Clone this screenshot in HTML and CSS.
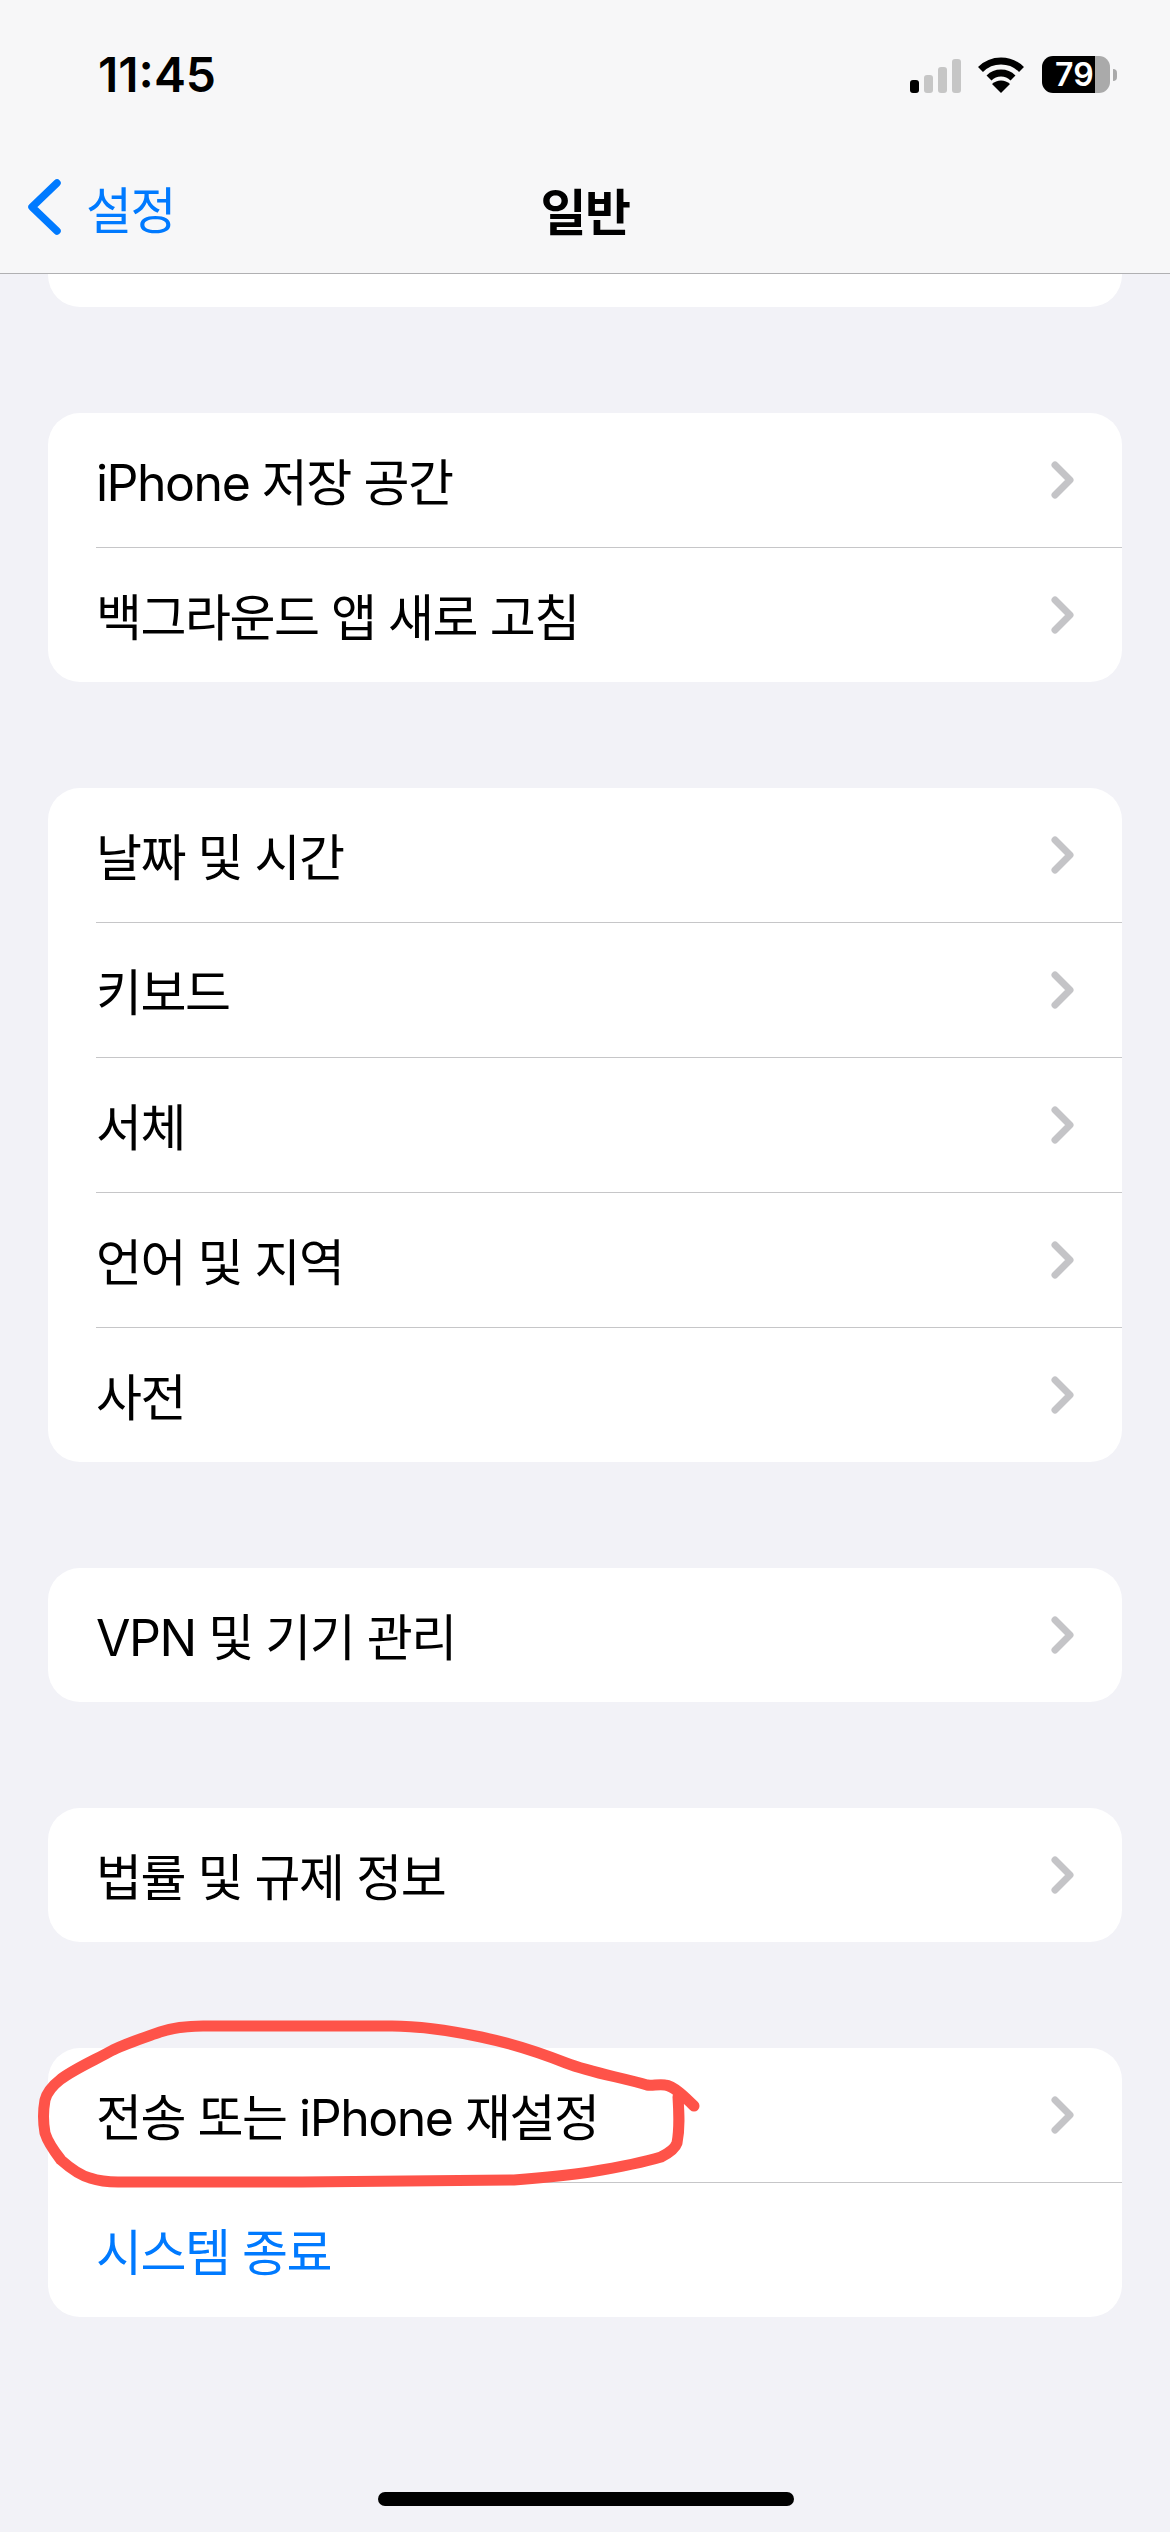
FILE: index.html
```html
<!DOCTYPE html>
<html lang="ko">
<head>
    <meta charset="utf-8">
    <title>일반</title>
    <link rel="stylesheet" href="styles.css">
</head>
<body>
    <div class="phone">
        <header class="top-bar">
            <div class="status-bar">
                <span class="clock">11:45</span>
                <div class="status-icons">
                    <div class="signal">
                        <span class="bar bar-1 on"></span>
                        <span class="bar bar-2"></span>
                        <span class="bar bar-3"></span>
                        <span class="bar bar-4"></span>
                    </div>
                    <svg class="wifi" viewBox="0 0 48 36" width="48" height="36">
                        <path d="M3.5 12.5A29 29 0 0 1 44.5 12.5" fill="none" stroke="#000" stroke-width="7"/>
                        <path d="M12 21A17 17 0 0 1 36 21" fill="none" stroke="#000" stroke-width="7"/>
                        <path d="M24 36L15 27A13 13 0 0 1 33 27Z" fill="#000"/>
                    </svg>
                    <div class="battery"><span>79</span></div>
                    <span class="battery-nub"></span>
                </div>
            </div>
            <nav class="nav-bar">
                <a class="back-link">
                    <svg class="back-icon" viewBox="0 0 36 58" width="36" height="58">
                        <path d="M31 5L6 29L31 53" fill="none" stroke="#007aff" stroke-width="7.5" stroke-linecap="round" stroke-linejoin="round"/>
                    </svg>
                    설정
                </a>
                <h1 class="nav-title">일반</h1>
            </nav>
        </header>

        <main class="settings">
            <div class="card card-cut"></div>

            <section class="card">
                <div class="row"><span>iPhone 저장 공간</span><svg class="chevron" viewBox="0 0 24 38" width="24" height="38"><path d="M4 4L19 19L4 34"/></svg></div>
                <div class="row"><span>백그라운드 앱 새로 고침</span><svg class="chevron" viewBox="0 0 24 38" width="24" height="38"><path d="M4 4L19 19L4 34"/></svg></div>
            </section>

            <section class="card">
                <div class="row"><span>날짜 및 시간</span><svg class="chevron" viewBox="0 0 24 38" width="24" height="38"><path d="M4 4L19 19L4 34"/></svg></div>
                <div class="row"><span>키보드</span><svg class="chevron" viewBox="0 0 24 38" width="24" height="38"><path d="M4 4L19 19L4 34"/></svg></div>
                <div class="row"><span>서체</span><svg class="chevron" viewBox="0 0 24 38" width="24" height="38"><path d="M4 4L19 19L4 34"/></svg></div>
                <div class="row"><span>언어 및 지역</span><svg class="chevron" viewBox="0 0 24 38" width="24" height="38"><path d="M4 4L19 19L4 34"/></svg></div>
                <div class="row"><span>사전</span><svg class="chevron" viewBox="0 0 24 38" width="24" height="38"><path d="M4 4L19 19L4 34"/></svg></div>
            </section>

            <section class="card">
                <div class="row"><span>VPN 및 기기 관리</span><svg class="chevron" viewBox="0 0 24 38" width="24" height="38"><path d="M4 4L19 19L4 34"/></svg></div>
            </section>

            <section class="card">
                <div class="row"><span>법률 및 규제 정보</span><svg class="chevron" viewBox="0 0 24 38" width="24" height="38"><path d="M4 4L19 19L4 34"/></svg></div>
            </section>

            <section class="card">
                <div class="row"><span>전송 또는 iPhone 재설정</span><svg class="chevron" viewBox="0 0 24 38" width="24" height="38"><path d="M4 4L19 19L4 34"/></svg></div>
                <div class="row row-action"><span>시스템 종료</span></div>
            </section>
        </main>

        <div class="home-bar"></div>

        <!-- red marker drawn on top of the screenshot -->
        <svg class="marker" viewBox="0 0 1170 2532" width="1170" height="2532">
            <path d="M694 2106C685 2097 674 2086 665 2085C658 2084 652 2086 647 2085C620 2077 592 2073 566 2063C538 2052 510 2043 481 2037C452 2031 422 2026 392 2026L203 2026C185 2026 172 2028 160 2032C143 2038 127 2043 113 2050C95 2060 76 2068 61 2079C52 2086 47 2092 45 2100C43 2111 43 2122 45 2133C48 2143 54 2151 61 2160C70 2168 79 2175 90 2178C99 2181 109 2182 118 2182L302 2182L514 2180C540 2178 565 2176 590 2172C614 2168 638 2164 661 2157C669 2153 675 2149 677 2143C680 2128 679 2113 678 2097"/>
        </svg>
    </div>
</body>
</html>
```

FILE: styles.css
```css
html, body {
    margin: 0;
    padding: 0;
}
body {
    font-family: Inter, "Noto Sans CJK KR", sans-serif;
    background-color: #f2f2f7;
}
.phone {
    position: relative;
    width: 1170px;
    height: 2532px;
    overflow: hidden;
    background-color: #f2f2f7;
}
.top-bar {
    height: 273px;
    background-color: #f7f7f8;
    border-bottom: 1px solid #b0b0b2;
}
.status-bar {
    height: 148px;
    padding: 0 53px 0 98px;
    display: flex;
    justify-content: space-between;
    align-items: center;
}
.clock {
    font-size: 48px;
    font-weight: 600;
    color: #000;
}
.status-icons {
    display: flex;
    align-items: flex-end;
}
.signal {
    display: flex;
    align-items: flex-end;
    gap: 5px;
    margin-right: 16px;
}
.bar {
    width: 9px;
    border-radius: 3px;
    background-color: #c6c6c6;
}
.bar.on {
    background-color: #000;
}
.bar-1 { height: 13px; }
.bar-2 { height: 18px; }
.bar-3 { height: 26px; }
.bar-4 { height: 34px; }
.wifi {
    margin-right: 17px;
}
.battery {
    width: 68px;
    height: 37px;
    border-radius: 11px;
    background: linear-gradient(to right, #000 78%, #aaa 78%);
    color: #fff;
    font-size: 32px;
    font-weight: 600;
    line-height: 37px;
    padding-left: 13px;
    box-sizing: border-box;
}
.battery-nub {
    width: 4px;
    height: 12px;
    margin: 0 0 12px 3px;
    border-radius: 0 6px 6px 0;
    background-color: #aaa;
}
.nav-bar {
    position: relative;
    height: 125px;
    display: flex;
    align-items: center;
    justify-content: center;
}
.back-link {
    position: absolute;
    left: 26px;
    top: 23px;
    display: flex;
    align-items: center;
    gap: 24px;
    font-size: 50px;
    letter-spacing: -1.5px;
    color: #007aff;
}
.nav-title {
    margin: -4px 0 0;
    font-size: 50px;
    font-weight: 600;
    letter-spacing: -1.5px;
    color: #000;
}
.settings {
    padding: 0 48px;
}
.card {
    background-color: #fff;
    border-radius: 32px;
    margin-bottom: 106px;
    overflow: hidden;
}
.card-cut {
    height: 33px;
    border-radius: 0 0 32px 32px;
}
.row {
    height: 134px;
    margin-left: 48px;
    padding-right: 47px;
    display: flex;
    align-items: center;
    justify-content: space-between;
    font-size: 50px;
    letter-spacing: -1.5px;
    color: #000;
    border-bottom: 1px solid #c6c6c8;
}
.row > span {
    margin-top: -3px;
}
.row:last-child {
    border-bottom: none;
}
.row-action {
    color: #007aff;
}
.chevron {
    fill: none;
    stroke: #c4c4c7;
    stroke-width: 7;
    stroke-linecap: round;
    stroke-linejoin: round;
}
.home-bar {
    position: absolute;
    left: 378px;
    bottom: 26px;
    width: 416px;
    height: 14px;
    border-radius: 7px;
    background-color: #000;
}
.marker {
    position: absolute;
    left: 0;
    top: 0;
    fill: none;
    stroke: #fe5349;
    stroke-width: 11;
    stroke-linecap: round;
    stroke-linejoin: round;
}
```
